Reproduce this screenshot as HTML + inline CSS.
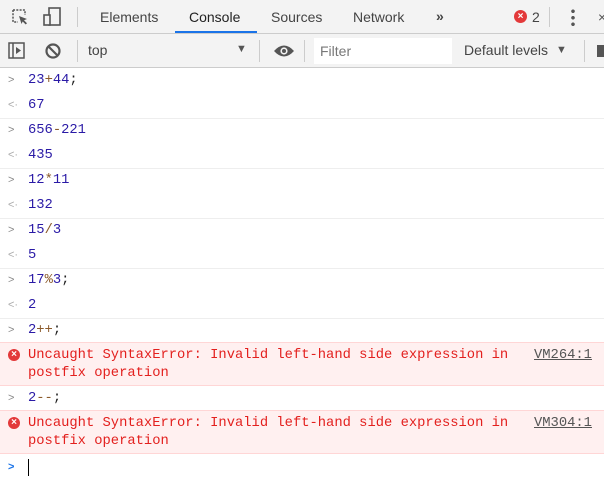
<!DOCTYPE html>
<html><head><meta charset="utf-8"><style>
*{box-sizing:border-box;margin:0;padding:0}
body{width:604px;height:489px;overflow:hidden;background:#fff;font-family:"Liberation Sans",sans-serif;position:relative}
.tb1{position:absolute;left:0;top:0;width:604px;height:34px;background:#f3f3f3;border-bottom:1px solid #ccc}
.tb2{position:absolute;left:0;top:34px;width:604px;height:34px;background:#f3f3f3;border-bottom:1px solid #ccc}
.t{position:absolute;font-size:14px;color:#444;top:9px}
.sep{position:absolute;width:1px;background:#ccc}
.mono{font-family:"Liberation Mono",monospace;font-size:13.8px}
.row{position:absolute;left:0;width:604px;height:25px;line-height:25px}
.row .txt{position:absolute;left:28px}
.n{color:#2a1aa6}.o{color:#8b5a2b}.p{color:#222}
.arr{position:absolute;left:8px;top:0;color:#888;font-size:11px;font-family:"Liberation Sans",sans-serif}
.bl{position:absolute;left:0;width:604px;height:1px;background:#eee}
.err{position:absolute;left:0;width:604px;background:#fff0f0;border-top:1px solid #ffd6d6;border-bottom:1px solid #ffd6d6;color:#e3201e}
.err .txt{position:absolute;left:28px;top:4px;line-height:18px}
.err .link{position:absolute;left:534px;top:4px;line-height:18px;color:#555;text-decoration:underline}
.ei{position:absolute;left:8px;top:6px;width:12px;height:12px;border-radius:50%;background:#e3393a;color:#fff;font-size:10px;line-height:12px;text-align:center;font-weight:bold;font-family:"Liberation Sans",sans-serif}
</style></head><body>
<div class="tb1">
 <svg style="position:absolute;left:11px;top:8px" width="18" height="18" viewBox="0 0 18 18"><path d="M2 2h12v5M2 2v12h5" fill="none" stroke="#555" stroke-width="1.5" stroke-dasharray="2 1.3"/><path d="M8 8l8 3-3 1.2 3 3-1.3 1.3-3-3L10.5 16z" fill="#555"/></svg>
 <svg style="position:absolute;left:42px;top:7px" width="20" height="20" viewBox="0 0 20 20"><rect x="7" y="1" width="11" height="17" fill="none" stroke="#555" stroke-width="1.6"/><rect x="2" y="8" width="6" height="10" fill="#f3f3f3" stroke="#555" stroke-width="1.6"/></svg>
 <div class="sep" style="left:77px;top:7px;height:20px"></div>
 <div class="t" style="left:100px">Elements</div>
 <div class="t" style="left:189px;color:#222">Console</div>
 <div style="position:absolute;left:175px;top:31px;width:82px;height:2px;background:#1a73e8"></div>
 <div class="t" style="left:271px">Sources</div>
 <div class="t" style="left:353px">Network</div>
 <div class="t" style="left:436px;font-weight:bold;font-size:14px;top:8px">»</div>
 <div style="position:absolute;left:514px;top:10px;width:13px;height:13px;border-radius:50%;background:#e3393a;color:#fff;font-size:10px;line-height:13px;text-align:center;font-weight:bold">×</div>
 <div class="t" style="left:532px;font-size:14px;top:9px">2</div>
 <div class="sep" style="left:549px;top:7px;height:20px"></div>
 <div style="position:absolute;left:571px;top:8px;width:4px;height:18px;background:radial-gradient(circle,#555 1.6px,transparent 2px) 0 0/4px 6.5px repeat-y"></div>
 <div class="t" style="left:598px;color:#555">×</div>
</div>
<div class="tb2">
 <svg style="position:absolute;left:8px;top:8px" width="18" height="18" viewBox="0 0 18 18"><rect x="1" y="1" width="15" height="15" fill="none" stroke="#555" stroke-width="1.5"/><line x1="5" y1="1" x2="5" y2="16" stroke="#555" stroke-width="1.5"/><path d="M8 5l5 3.5-5 3.5z" fill="#555"/></svg>
 <svg style="position:absolute;left:44px;top:8px" width="18" height="18" viewBox="0 0 18 18"><circle cx="9" cy="9" r="6.5" fill="none" stroke="#555" stroke-width="2.2"/><line x1="4.5" y1="4.5" x2="13.5" y2="13.5" stroke="#555" stroke-width="2.2"/></svg>
 <div class="sep" style="left:77px;top:6px;height:22px"></div>
 <div class="t" style="left:88px;top:8px">top</div>
 <div class="t" style="left:236px;top:9px;font-size:11px;color:#555">▼</div>
 <div class="sep" style="left:259px;top:6px;height:22px"></div>
 <svg style="position:absolute;left:273px;top:9px" width="22" height="16" viewBox="0 0 22 16"><path d="M1 8Q11 -3 21 8Q11 19 1 8z" fill="#555"/><circle cx="11" cy="8" r="3.6" fill="#f3f3f3"/><circle cx="11" cy="8" r="2" fill="#555"/></svg>
 <div class="sep" style="left:304px;top:6px;height:22px"></div>
 <div style="position:absolute;left:314px;top:4px;width:138px;height:26px;background:#fff"></div>
 <div class="t" style="left:320px;top:9px;color:#777">Filter</div>
 <div class="t" style="left:464px;top:8px;color:#444">Default levels</div>
 <div class="t" style="left:556px;top:10px;font-size:11px;color:#555">▼</div>
 <div class="sep" style="left:584px;top:6px;height:22px"></div>
 <div style="position:absolute;left:597px;top:11px;width:7px;height:12px;background:#555"></div>
</div>

<div class="mono">
<div class="row" style="top:68px"><span class="arr">&gt;</span><span class="txt"><span class="n">23</span><span class="o">+</span><span class="n">44</span><span class="p">;</span></span></div>
<div class="row" style="top:93px"><span class="arr" style="color:#aaa">&lt;·</span><span class="txt n">67</span></div>
<div class="bl" style="top:118px"></div>
<div class="row" style="top:118px"><span class="arr">&gt;</span><span class="txt"><span class="n">656</span><span class="o">-</span><span class="n">221</span></span></div>
<div class="row" style="top:143px"><span class="arr" style="color:#aaa">&lt;·</span><span class="txt n">435</span></div>
<div class="bl" style="top:168px"></div>
<div class="row" style="top:168px"><span class="arr">&gt;</span><span class="txt"><span class="n">12</span><span class="o">*</span><span class="n">11</span></span></div>
<div class="row" style="top:193px"><span class="arr" style="color:#aaa">&lt;·</span><span class="txt n">132</span></div>
<div class="bl" style="top:218px"></div>
<div class="row" style="top:218px"><span class="arr">&gt;</span><span class="txt"><span class="n">15</span><span class="o">/</span><span class="n">3</span></span></div>
<div class="row" style="top:243px"><span class="arr" style="color:#aaa">&lt;·</span><span class="txt n">5</span></div>
<div class="bl" style="top:268px"></div>
<div class="row" style="top:268px"><span class="arr">&gt;</span><span class="txt"><span class="n">17</span><span class="o">%</span><span class="n">3</span><span class="p">;</span></span></div>
<div class="row" style="top:293px"><span class="arr" style="color:#aaa">&lt;·</span><span class="txt n">2</span></div>
<div class="bl" style="top:318px"></div>
<div class="row" style="top:318px"><span class="arr">&gt;</span><span class="txt"><span class="n">2</span><span class="o">++</span><span class="p">;</span></span></div>
<div class="err" style="top:342px;height:44px"><span class="ei">×</span><span class="txt">Uncaught SyntaxError: Invalid left-hand side expression in<br>postfix operation</span><span class="link">VM264:1</span></div>
<div class="row" style="top:386px"><span class="arr">&gt;</span><span class="txt"><span class="n">2</span><span class="o">--</span><span class="p">;</span></span></div>
<div class="err" style="top:410px;height:44px"><span class="ei">×</span><span class="txt">Uncaught SyntaxError: Invalid left-hand side expression in<br>postfix operation</span><span class="link">VM304:1</span></div>
<div class="row" style="top:455px"><span class="arr" style="color:#1a73e8;font-weight:bold">&gt;</span><span style="position:absolute;left:28px;top:4px;width:1px;height:17px;background:#000"></span></div>
</div>
</body></html>
